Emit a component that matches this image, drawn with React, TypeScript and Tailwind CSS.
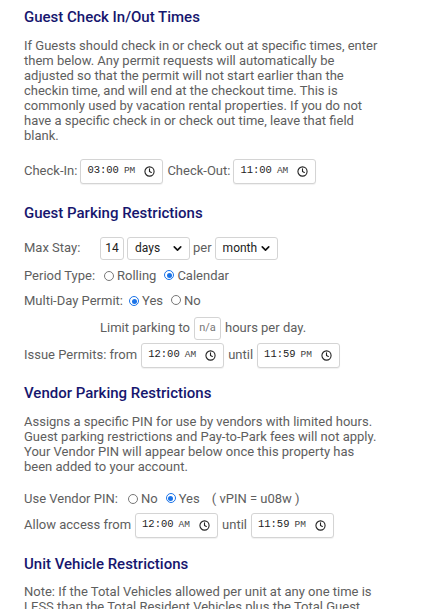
import { Clock, ChevronDown } from 'lucide-react';

const font = { fontFamily: 'Roboto, "Liberation Sans", Arial, sans-serif' };

function TimeBox({ value, w = 'w-[83px]' }: { value: string; w?: string }) {
  const [hm, ap] = value.split(' ');
  return (
    <span className={`inline-flex items-center h-[25px] ${w} border border-[#d4d4d4] rounded-[3px] bg-white pl-[6px] pr-[7px] shadow-[0_1px_1px_rgba(0,0,0,0.06)]`}>
      <span className="text-[10.5px] text-[#222]" style={{ fontFamily: '"Liberation Mono", "DejaVu Sans Mono", monospace' }}>
        {hm}<span className="text-[9.5px] ml-[5px] text-[#444]">{ap}</span>
      </span>
      <Clock className="w-[11px] h-[11px] ml-auto text-[#222]" strokeWidth={2.4} />
    </span>
  );
}

function SelectBox({ value, w }: { value: string; w: string }) {
  return (
    <span className={`inline-flex items-center h-[23px] ${w} border border-[#d4d4d4] rounded-[3px] bg-white pl-[7px] pr-[5px] text-[12px] text-[#222]`}>
      {value}
      <ChevronDown className="w-[13px] h-[13px] ml-auto text-[#111]" strokeWidth={3} />
    </span>
  );
}

function Radio({ on }: { on?: boolean }) {
  return on ? (
    <span className="inline-block w-[10px] h-[10px] rounded-full border-[1.5px] border-[#1a73e8] bg-white p-[1.5px]">
      <span className="block w-full h-full rounded-full bg-[#1a73e8]" />
    </span>
  ) : (
    <span className="inline-block w-[10px] h-[10px] rounded-full border border-[#777] bg-white" />
  );
}

export default function App() {
  return (
    <div className="w-[430px] min-h-[609px] bg-white px-6 text-[13px] text-[#5e5e5e]" style={font}>
      <h2 className="pt-[7px] text-[15px] leading-[20px] font-medium text-[#16166e]">Guest Check In/Out Times</h2>
      <p className="mt-[11px] leading-[15px] w-[362px]">
        If Guests should check in or check out at specific times, enter them below. Any permit requests will automatically be adjusted so that the permit will not start earlier than the checkin time, and will end at the checkout time. This is commonly used by vacation rental properties. If you do not have a specific check in or check out time, leave that field blank.
      </p>
      <div className="mt-[15px] flex items-center h-[26px] gap-[3px]">
        <span>Check-In:</span>
        <TimeBox value="03:00 PM" />
        <span className="ml-[1px]">Check-Out:</span>
        <TimeBox value="11:00 AM" />
      </div>

      <h2 className="mt-[19px] text-[15px] leading-[20px] font-medium text-[#16166e]">Guest Parking Restrictions</h2>
      <div className="mt-[12px] flex items-center h-[26px]">
        <span className="w-[76px]">Max Stay:</span>
        <span className="inline-flex items-center justify-center h-[23px] w-[24px] border border-[#d4d4d4] rounded-[3px] text-[12px] text-[#222]">14</span>
        <span className="ml-[3px]"><SelectBox value="days" w="w-[63px]" /></span>
        <span className="mx-[3px]">per</span>
        <SelectBox value="month" w="w-[63px]" />
      </div>
      <div className="mt-[5px] flex items-center h-[20px]">
        <span className="w-[80px]">Period Type:</span>
        <Radio />
        <span className="ml-[3px]">Rolling</span>
        <span className="ml-[8px]"><Radio on /></span>
        <span className="ml-[3px]">Calendar</span>
      </div>
      <div className="mt-[5px] flex items-center h-[20px]">
        <span className="w-[105px]">Multi-Day Permit:</span>
        <Radio on />
        <span className="ml-[3px]">Yes</span>
        <span className="ml-[8px]"><Radio /></span>
        <span className="ml-[3px]">No</span>
      </div>
      <div className="mt-[5px] flex items-center h-[24px] pl-[76px] gap-[4px]">
        <span>Limit parking to</span>
        <span className="inline-flex items-center justify-center h-[23px] w-[27px] border border-[#d4d4d4] rounded-[3px] text-[11px] text-[#777]">n/a</span>
        <span>hours per day.</span>
      </div>
      <div className="mt-[2px] flex items-center h-[26px] gap-[4px]">
        <span>Issue Permits: from</span>
        <TimeBox value="12:00 AM" />
        <span>until</span>
        <TimeBox value="11:59 PM" />
      </div>

      <h2 className="mt-[15px] text-[15px] leading-[20px] font-medium text-[#16166e]">Vendor Parking Restrictions</h2>
      <p className="mt-[11px] leading-[15px] w-[356px]">
        Assigns a specific PIN for use by vendors with limited hours. Guest parking restrictions and Pay-to-Park fees will not apply. Your Vendor PIN will appear below once this property has been added to your account.
      </p>
      <div className="mt-[15px] flex items-center h-[20px]">
        <span className="w-[104px]">Use Vendor PIN:</span>
        <Radio />
        <span className="ml-[3px]">No</span>
        <span className="ml-[8px]"><Radio on /></span>
        <span className="ml-[3px]">Yes</span>
        <span className="ml-[12px]">( vPIN = u08w )</span>
      </div>
      <div className="mt-[3px] flex items-center h-[26px] gap-[4px]">
        <span>Allow access from</span>
        <TimeBox value="12:00 AM" />
        <span>until</span>
        <TimeBox value="11:59 PM" />
      </div>

      <h2 className="mt-[16px] text-[15px] leading-[20px] font-medium text-[#16166e]">Unit Vehicle Restrictions</h2>
      <p className="mt-[10px] leading-[15px] w-[362px]">
        Note: If the Total Vehicles allowed per unit at any one time is LESS than the Total Resident Vehicles plus the Total Guest Vehicles, then the lower number will apply.
      </p>
    </div>
  );
}
